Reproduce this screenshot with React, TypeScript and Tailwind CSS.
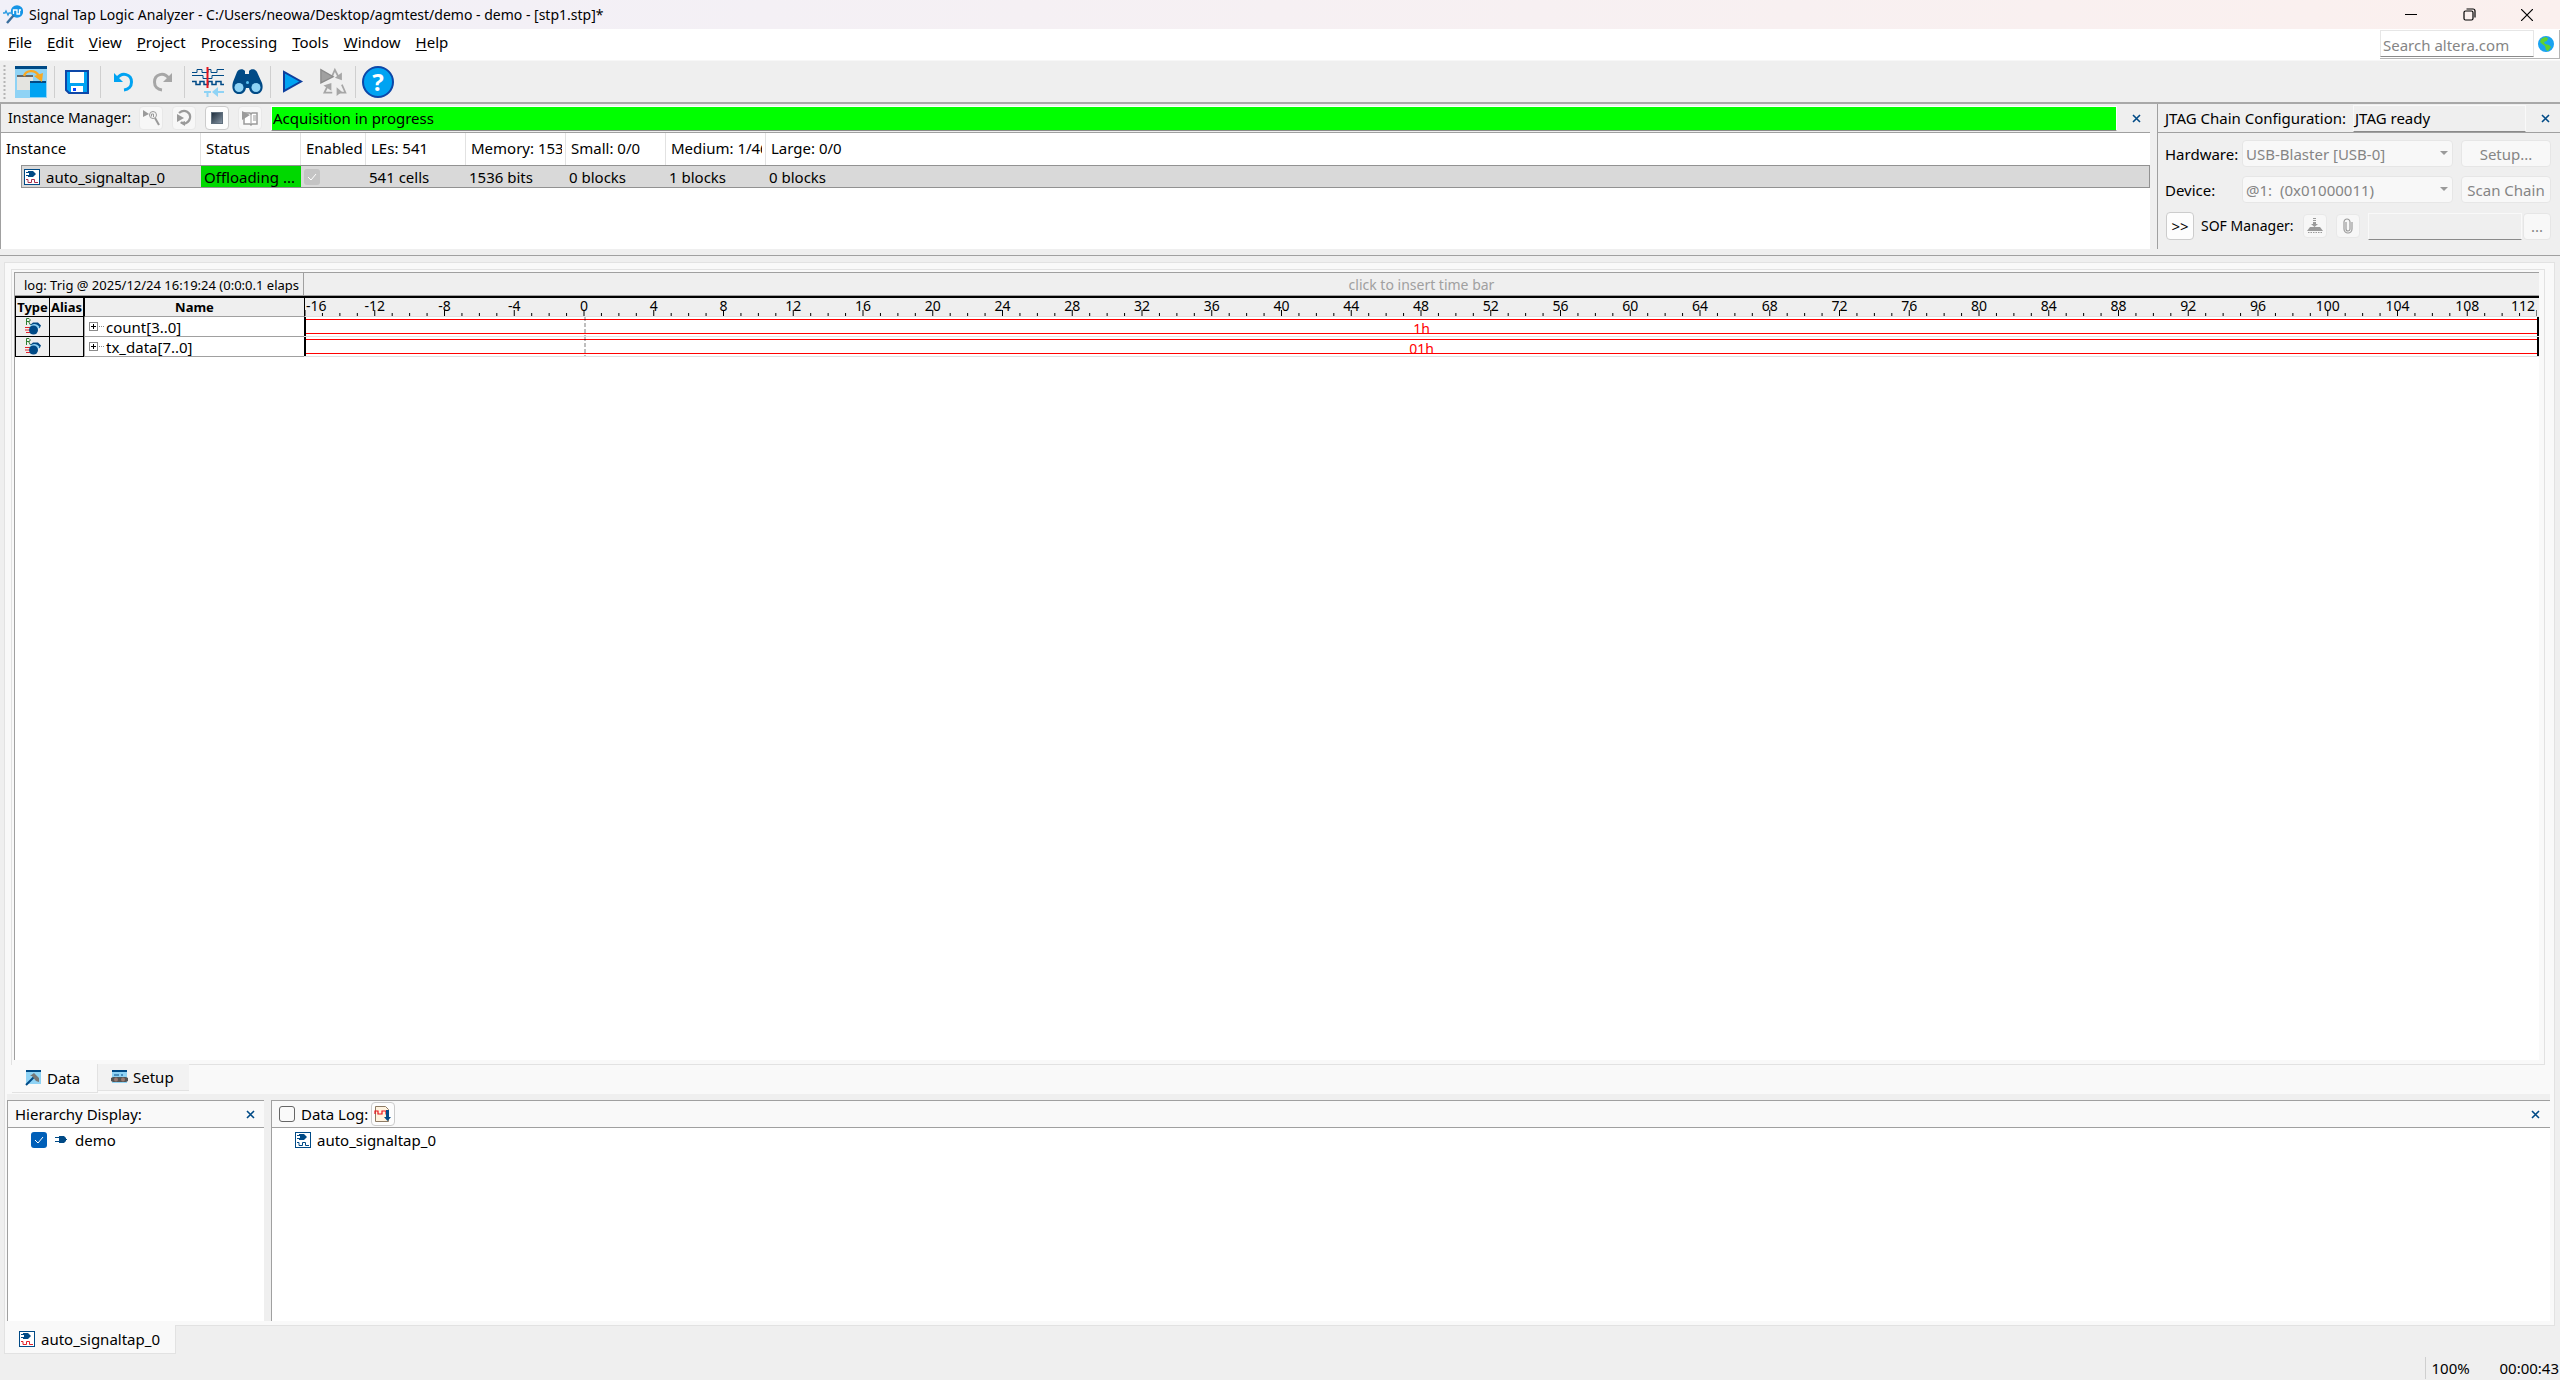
import React from "react";

const NAVY = "#004a86";
const SKY = "#00a3f2";

function SignalTapLogo() {
  return (
    <svg width="20" height="20" viewBox="0 0 20 20" aria-hidden="true">
      <circle cx="14" cy="6.5" r="5.2" fill="#1695e6" stroke="#1695e6" strokeWidth="2" />
      <path d="M10.500 9V5H14v4h2.500V5H18" fill="none" stroke="#fff" strokeWidth="1.3" />
      <path d="M10.5 10.5 4 18" stroke="#3a6f9e" strokeWidth="2.4" />
      <path d="M0 8h2l1-2 2 4 1-2h3" fill="none" stroke="#2b9ae0" strokeWidth="1.4" />
    </svg>
  );
}

function InstanceIcon({ wave = "#e3222b" }: { wave?: string }) {
  return (
    <svg width="16" height="16" viewBox="0 0 16 16" aria-hidden="true" className="shrink-0">
      <rect x="0.5" y="0.5" width="15" height="15" fill="#fff" stroke={NAVY} />
      <path d="M2 3.5h3M2 6.5h3M10 5h2" stroke={NAVY} />
      <path d="M4 2h5l2 2v2L9 8H4V7h1V3H4z" fill={NAVY} />
      <path d="M2 10.5h2v3h3.5v-3h3v3H14" fill="none" stroke={wave} />
    </svg>
  );
}

function EntityIcon() {
  return (
    <svg width="12" height="10" viewBox="0 0 12 10" aria-hidden="true">
      <path d="M0 2.500h5M0 6.500h5M9 4.500h3" stroke={NAVY} />
      <path d="M4 1h5l2 2v3L9 8H4z" fill={NAVY} />
    </svg>
  );
}

function RegIcon() {
  return (
    <svg width="18" height="17" viewBox="0 0 18 17" aria-hidden="true">
      <path d="M2.500 7V0.500H5L6 1.500V3L5 3.500H3M4.500 3.500 6.500 7" fill="none" stroke="#2e7d32" />
      <path d="M1 9.500h5M1 12h5M2 14.500h5" stroke="#e3222b" />
      <path d="M6 7 9 4.500h5l3 3-1.500 3L14 8z" fill={NAVY} />
      <path d="M5.500 8.500C8 5 13 5 15.500 9l-2 2.500z" fill="#8fd3f5" />
      <circle cx="9.500" cy="12" r="4.500" fill={NAVY} />
    </svg>
  );
}

function Close({ label }: { label: string }) {
  return (
    <button aria-label={label} className="flex h-4 w-4 shrink-0 items-center justify-center">
      <svg width="9" height="9" viewBox="0 0 9 9" aria-hidden="true">
        <path d="M1 1l7 7M8 1l-7 7" stroke={NAVY} strokeWidth="1.6" />
      </svg>
    </button>
  );
}

function ToolSep() {
  return <span className="h-8 w-px shrink-0 bg-[#cfcfcf]" />;
}

function Tool({ label, children }: { label: string; children: React.ReactNode }) {
  return (
    <button aria-label={label} className="flex h-8 w-8 shrink-0 items-center justify-center">
      {children}
    </button>
  );
}

function Toolbar() {
  return (
    <div className="flex h-[42px] items-center border-t border-[#f7f7f7] pl-[3px]">
      <svg width="3" height="34" viewBox="0 0 3 34" aria-hidden="true" className="mr-[9px]">
        <path d="M1.500 0v34" stroke="#b5b5b5" strokeWidth="2" strokeDasharray="2 2" />
      </svg>
      <Tool label="Switch window">
        <svg width="32" height="32" viewBox="0 0 32 32">
          <rect width="32" height="32" fill="#8fd3f5" />
          <rect width="32" height="3" fill={NAVY} />
          <rect x="2" y="10" width="16" height="14" fill="#e4e4e0" />
          <rect x="2" y="9" width="16" height="2" fill="#666" />
          <rect x="15" y="16" width="16" height="15" fill={SKY} />
          <rect x="15" y="15" width="16" height="2" fill={NAVY} />
          <path d="M9 10C11 4 20 3 24 10" fill="none" stroke="#f7a823" strokeWidth="2.400" />
          <path d="M19 10l9-3-1 9z" fill="#f7a823" />
        </svg>
      </Tool>
      <span className="w-[7px]" />
      <ToolSep />
      <span className="w-[6px]" />
      <Tool label="Save">
        <svg width="24" height="24" viewBox="0 0 24 24">
          <path d="M1 1h22v22H4l-3-3z" fill={SKY} stroke="#0d47a8" strokeWidth="2" />
          <rect x="5" y="2" width="14" height="11" fill="#fff" />
          <rect x="6" y="16" width="12" height="6" fill="#fff" />
          <rect x="8" y="18" width="3" height="3" fill="#0d47ff" />
        </svg>
      </Tool>
      <span className="w-[7px]" />
      <ToolSep />
      <span className="w-[7px]" />
      <Tool label="Undo">
        <svg width="20" height="20" viewBox="0 0 20 20">
          <path d="M3 6.500C8-.5 17.500 2 17.500 10c0 4.500-3 7.500-7.500 8" fill="none" stroke={SKY} strokeWidth="3" />
          <path d="M0 1v9h9z" fill={SKY} />
        </svg>
      </Tool>
      <span className="w-[6px]" />
      <Tool label="Redo">
        <svg width="20" height="20" viewBox="0 0 20 20">
          <path d="M17 6.500C12-.5 2.500 2 2.500 10c0 4.500 3 7.500 7.500 8" fill="none" stroke="#a6a6a6" strokeWidth="3" />
          <path d="M20 1v9H11z" fill="#a6a6a6" />
        </svg>
      </Tool>
      <span className="w-[6px]" />
      <ToolSep />
      <span className="w-[7px]" />
      <Tool label="Insert time bar">
        <svg width="32" height="32" viewBox="0 0 32 32" fill="none" stroke={NAVY}>
          <path d="M0 6.500h5v-3h5v3h6v-3h3v3h6v-3h7" />
          <path d="M0 9.500h11v3h9v-3h12" />
          <path d="M0 15.500h4v3h4v-3h4v3h4v-3h4v3h4v-3h5v3h3" strokeWidth="1.500" />
          <path d="M15.500 1v21" stroke="#e8141c" strokeWidth="2" />
          <path d="M12 26h7M15.500 26v5M21 26h11" stroke="#8fd3f5" strokeWidth="2" />
          <path d="M26 21v10l-6-5z" fill="#8fd3f5" stroke="none" />
        </svg>
      </Tool>
      <span className="w-[7px]" />
      <Tool label="Find">
        <svg width="32" height="32" viewBox="0 0 32 32">
          <path d="M2 16 6 6c1-3 6-4 8-1v3h4V5c2-3 7-2 8 1l5 11c2 6-1 11-6 11-4 0-6-2-7-6h-3c-1 4-3 6-7 6-5 0-8-5-6-12z" fill={NAVY} />
          <circle cx="8" cy="21.500" r="4.500" fill="#8fd3f5" />
          <circle cx="25" cy="21.500" r="4.500" fill="#8fd3f5" />
          <circle cx="16.500" cy="16.500" r="1.500" fill="#57bff0" />
        </svg>
      </Tool>
      <span className="w-[7px]" />
      <ToolSep />
      <span className="w-[6px]" />
      <Tool label="Run analysis">
        <svg width="22" height="24" viewBox="0 0 22 24">
          <path d="M2 2v19l17-9.500z" fill={SKY} stroke="#0d3f9e" strokeWidth="2" />
        </svg>
      </Tool>
      <span className="w-[7px]" />
      <Tool label="Autorun analysis">
        <svg width="32" height="32" viewBox="0 0 32 32" fill="none" className="ml-1">
          <path d="M14 9l3-7 5 10M9 20 5 28h9M20 28h9l-4-9" stroke="#a6a6a6" strokeWidth="2" />
          <path d="M17 11l8 3V5zM4 20l9-3v9zM19 22v10l6-5z" fill="#a6a6a6" />
          <path d="M1 2v15l14-7z" fill="#a0a0a0" stroke="#8a8a8a" strokeWidth="1.500" />
        </svg>
      </Tool>
      <span className="w-[7px]" />
      <ToolSep />
      <span className="w-[6px]" />
      <Tool label="Help">
        <span className="flex h-8 w-8 items-center justify-center rounded-full border-2 border-[#0d47a8] bg-[#00a3f2] text-2xl font-bold text-white">
          ?
        </span>
      </Tool>
    </div>
  );
}

const menus: [string, string, string][] = [
  ["", "F", "ile"],
  ["", "E", "dit"],
  ["", "V", "iew"],
  ["", "P", "roject"],
  ["P", "r", "ocessing"],
  ["", "T", "ools"],
  ["", "W", "indow"],
  ["", "H", "elp"],
];

function MiniButton({ label, raised, children }: { label: string; raised?: boolean; children: React.ReactNode }) {
  return (
    <button
      aria-label={label}
      className={
        raised
          ? "flex h-6 w-6 shrink-0 items-center justify-center rounded border border-[#cccccc] bg-[#fdfdfd]"
          : "flex h-6 w-6 shrink-0 items-center justify-center rounded border border-[#e8e8e8] bg-[#f7f7f7]"
      }
    >
      {children}
    </button>
  );
}

const instanceHeads = ["Instance", "Status", "Enabled", "LEs: 541", "Memory: 153", "Small: 0/0", "Medium: 1/46", "Large: 0/0"];

function InstanceManager() {
  return (
    <section className="flex min-w-0 flex-1 flex-col border-l border-[#a0a0a0] bg-white">
      <div className="flex h-[29px] items-center border-b border-[#a0a0a0] bg-[#efefef] pl-[7px]">
        <span className="w-[131px] shrink-0 text-[14px] whitespace-nowrap">Instance Manager:</span>
        <div className="flex gap-[9px]">
          <MiniButton label="Run">
            <svg width="18" height="18" viewBox="0 0 18 18" fill="none" stroke="#9a9a9a">
              <path d="M1 1v7l6-3z" fill="#9a9a9a" stroke="none" />
              <circle cx="11" cy="6" r="3.500" />
              <path d="M13 9l4 7" strokeWidth="2" />
              <path d="M9.500 7.500V5h2v3" />
            </svg>
          </MiniButton>
          <MiniButton label="Autorun">
            <svg width="18" height="18" viewBox="0 0 18 18" fill="none">
              <path d="M4 4c6-5 12 0 11 5s-6 7-9 4" stroke="#9a9a9a" strokeWidth="2.200" />
              <path d="M2 5v8l7-4zM5 14l5-2v5z" fill="#9a9a9a" />
            </svg>
          </MiniButton>
          <MiniButton label="Stop" raised>
            <span className="h-3 w-3 border border-[#5f6f7d] bg-linear-to-br from-[#22313f] to-[#8796a5]" />
          </MiniButton>
          <MiniButton label="Read data">
            <svg width="18" height="18" viewBox="0 0 18 18">
              <path d="M3 4h6l1 1 1-1h5v11h-5l-1 1-1-1H3z" fill="#fff" stroke="#9a9a9a" strokeWidth="1.500" />
              <path d="M10 5v10M12 7h3M12 9h3M12 11h3" stroke="#9a9a9a" />
              <path d="M1 2v9l8-5z" fill="#9a9a9a" />
            </svg>
          </MiniButton>
        </div>
        <div className="ml-[9px] flex h-[25px] flex-1 items-center border border-white border-b-[#8a8a8a] bg-[#00ff00] pl-px">
          Acquisition in progress
        </div>
        <div className="flex w-[33px] shrink-0 items-center justify-center pl-[5px]">
          <Close label="Close Instance Manager" />
        </div>
      </div>
      <table className="w-full table-fixed border-separate border-spacing-0 text-left">
        <colgroup>
          <col className="w-[200px]" />
          <col className="w-[100px]" />
          <col className="w-[65px]" />
          <col className="w-[100px]" />
          <col className="w-[100px]" />
          <col className="w-[100px]" />
          <col className="w-[100px]" />
          <col />
        </colgroup>
        <thead>
          <tr className="h-8">
            {instanceHeads.map((h) => (
              <th key={h} className="border-r border-[#e2e2e2] py-0 pr-[3px] pl-[5px] font-normal last:border-r-0">
                <span className="block overflow-hidden pb-[2px] whitespace-nowrap">{h}</span>
              </th>
            ))}
          </tr>
        </thead>
        <tbody>
          <tr className="h-[23px]">
            <td className="p-0 pl-5">
              <div className="flex h-[23px] items-center gap-[6px] border border-r-0 border-[#929292] bg-[#d9d9d9] pl-[2px]">
                <InstanceIcon wave="#a83250" />
                auto_signaltap_0
              </div>
            </td>
            <td className="border-y border-[#929292] bg-[#00d800] p-0 pl-[3px] whitespace-nowrap">Offloading ...</td>
            <td className="border-y border-[#929292] bg-[#d9d9d9] p-0 pl-[3px]">
              <span className="relative block h-4 w-4">
                <input
                  type="checkbox"
                  checked
                  readOnly
                  disabled
                  aria-label="Enable auto_signaltap_0"
                  className="block h-4 w-4 appearance-none rounded-[3px] bg-[#c4c4c4]"
                />
                <svg width="16" height="16" viewBox="0 0 16 16" className="pointer-events-none absolute inset-0">
                  <path d="M4 8l3 3 5-6" fill="none" stroke="#fff" />
                </svg>
              </span>
            </td>
            {["541 cells", "1536 bits", "0 blocks", "1 blocks"].map((t) => (
              <td key={t} className="border-y border-[#929292] bg-[#d9d9d9] p-0 pl-[3px]">
                {t}
              </td>
            ))}
            <td className="border border-l-0 border-[#929292] bg-[#d9d9d9] p-0 pl-[3px]">0 blocks</td>
          </tr>
        </tbody>
      </table>
    </section>
  );
}

function ChainSelect({ id, value }: { id: string; value: string }) {
  return (
    <div className="relative w-[211px]">
      <select
        id={id}
        disabled
        className="block h-[27px] w-full appearance-none rounded border border-[#e6e6e6] bg-[#f8f8f8] pl-[3px] text-[#858585] opacity-100"
      >
        <option>{value}</option>
      </select>
      <svg width="8" height="4" viewBox="0 0 8 4" className="pointer-events-none absolute top-[11px] right-[5px]">
        <path d="M0 0h8L4 4z" fill="#9a9a9a" />
      </svg>
    </div>
  );
}

function JtagChain() {
  return (
    <section className="w-[403px] shrink-0 border-l border-[#a0a0a0]">
      <div className="flex h-[29px] items-center border-b border-[#a0a0a0] pl-[7px]">
        <span className="w-[188px] shrink-0 whitespace-nowrap">JTAG Chain Configuration:</span>
        <span className="flex h-[27px] flex-1 items-center border border-[#f9f9f9] border-b-[#8a8a8a] pl-px">JTAG ready</span>
        <div className="flex w-[34px] items-center justify-center pl-[4px]">
          <Close label="Close JTAG Chain Configuration" />
        </div>
      </div>
      <div className="flex flex-col gap-[9px] pt-[7px] pr-[9px] pl-[7px]">
        <div className="flex items-center">
          <label htmlFor="hardware" className="w-[77px]">
            Hardware:
          </label>
          <ChainSelect id="hardware" value="USB-Blaster [USB-0]" />
          <button disabled className="ml-2 h-[27px] flex-1 rounded border border-[#e6e6e6] bg-[#f8f8f8] text-[#858585]">
            Setup...
          </button>
        </div>
        <div className="flex items-center">
          <label htmlFor="device" className="w-[77px]">
            Device:
          </label>
          <ChainSelect id="device" value="@1:&nbsp; (0x01000011)" />
          <button disabled className="ml-2 h-[27px] flex-1 rounded border border-[#e6e6e6] bg-[#f8f8f8] whitespace-nowrap text-[#858585]">
            Scan Chain
          </button>
        </div>
        <div className="flex items-center">
          <button className="ml-px h-[28px] w-[28px] rounded border border-[#cccccc] bg-[#fdfdfd]">&gt;&gt;</button>
          <label htmlFor="sof" className="ml-[7px] w-[102px] text-[14px] whitespace-nowrap">
            SOF Manager:
          </label>
          <MiniButton label="Program device">
            <svg width="16" height="16" viewBox="0 0 16 16" fill="#9a9a9a">
              <path d="M6 0h3v1H6zM6 2h3v1H6zM6 4h3v2h2L7.500 9 4 6h2z" />
              <path d="M3 9h10l3 4H0z" />
              <path d="M1 14.500h15" stroke="#9a9a9a" strokeDasharray="1.500 1" />
            </svg>
          </MiniButton>
          <span className="w-[9px]" />
          <MiniButton label="Attach SOF file">
            <svg width="10" height="16" viewBox="0 0 10 16" fill="none" stroke="#9a9a9a" strokeWidth="1.200">
              <path d="M3 4v7a2 2 0 0 0 4 0V4a3 3 0 0 0-6 0v7a4 4 0 0 0 8 0V4" />
            </svg>
          </MiniButton>
          <input
            id="sof"
            disabled
            className="ml-2 h-[27px] w-0 flex-1 border border-[#f9f9f9] border-b-[#8a8a8a] bg-[#efefef]"
          />
          <button disabled aria-label="Browse" className="ml-px h-[27px] w-[28px] rounded border border-[#e6e6e6] bg-[#f8f8f8] text-[#858585]">
            ...
          </button>
        </div>
      </div>
    </section>
  );
}

const samples = Array.from({ length: 129 }, (_, i) => i - 16);

function Ruler() {
  return (
    <div className="relative mr-[2px] h-[18px] text-[14px] leading-[18px]">
      <svg width="100%" height="18" className="absolute inset-0" aria-hidden="true">
        {samples.map((s) => {
          const x = `${((s + 16) / 128) * 100}%`;
          return <line key={s} x1={x} x2={x} y1={s % 4 === 0 ? 12 : 15} y2="18" stroke="#000" />;
        })}
      </svg>
      {samples
        .filter((s) => s % 4 === 0)
        .map((s) => (
          <span
            key={s}
            className={
              s === -16
                ? "absolute top-[-1px] left-[1px]"
                : s === 112
                  ? "absolute top-[-1px] right-[2px]"
                  : "absolute top-[-1px] -translate-x-1/2"
            }
            style={s === -16 || s === 112 ? undefined : { left: `${((s + 16) / 128) * 100}%` }}
          >
            {s}
          </span>
        ))}
    </div>
  );
}

function Wave({ value }: { value: string }) {
  return (
    <div className="relative h-[19px] border-x-2 border-black">
      <div className="absolute inset-x-0 top-[2px] flex h-[15px] items-center justify-center border-y border-[#ff0000] pt-1 text-[14px] leading-none text-[#ff0000]">
        {value}
      </div>
      <svg width="1" height="19" className="absolute top-0 left-[12.5%] -translate-x-1/2" aria-hidden="true">
        <path d="M0.500 0v19" stroke="#000" strokeDasharray="4 2" />
      </svg>
    </div>
  );
}

function Viewer() {
  return (
    <div className="min-h-0 flex-1 border-t border-l border-[#a0a0a0] bg-white">
      <div className="flex h-[23px] items-center border-b border-[#a0a0a0] bg-[#efefef]">
        <div className="flex h-full w-[289px] shrink-0 items-center overflow-hidden border-r border-[#a0a0a0] pt-[2px] pl-[9px] text-[13px] whitespace-nowrap">
          log: Trig @ 2025/12/24 16:19:24 (0:0:0.1 elaps
        </div>
        <div className="flex-1 text-center text-[#a0a0a0]">
          <span className="text-[14px]">click to insert time bar</span>
        </div>
      </div>
      <table className="w-full table-fixed border-separate border-spacing-0 border-t-2 border-black">
        <colgroup>
          <col className="w-[35px]" />
          <col className="w-[34px]" />
          <col className="w-[220px]" />
          <col />
        </colgroup>
        <thead>
          <tr className="h-[19px] bg-[#efefef] text-[13px] leading-[18px] font-bold">
            <th className="border-r border-b border-l border-black p-0">
              <span className="flex justify-center">Type</span>
            </th>
            <th className="border-r border-b border-black p-0">
              <span className="flex justify-center">Alias</span>
            </th>
            <th className="border-b border-l border-black border-b-[#a0a0a0] p-0">Name</th>
            <th className="border-b border-l border-black border-b-[#e0e0e0] p-0 text-left font-normal">
              <Ruler />
            </th>
          </tr>
        </thead>
        <tbody>
          {[
            ["count[3..0]", "1h"],
            ["tx_data[7..0]", "01h"],
          ].map(([name, value]) => (
            <tr key={name} className="h-5">
              <td className="border-r border-b border-l border-black bg-[#efefef] p-0">
                <div className="flex justify-center">
                  <RegIcon />
                </div>
              </td>
              <td className="border-r border-b border-black bg-[#efefef] p-0" />
              <td className="border-b border-l border-[#a0a0a0] p-0">
                <div className="flex h-[19px] items-center pl-[4px] leading-[18px]">
                  <button
                    aria-label={`Expand ${name}`}
                    className="flex h-[9px] w-[9px] items-center justify-center border border-[#8a8a8a] bg-white"
                  >
                    <svg width="5" height="5" viewBox="0 0 5 5">
                      <path d="M0 2.500h5M2.500 0v5" stroke="#000" />
                    </svg>
                  </button>
                  <span className="mr-[2px] ml-px w-[5px] border-t border-dotted border-[#8a8a8a]" />
                  <span className="pt-px">{name}</span>
                </div>
              </td>
              <td className="border-b border-[#e0e0e0] p-0">
                <Wave value={value} />
              </td>
            </tr>
          ))}
        </tbody>
      </table>
    </div>
  );
}

function BottomPanels() {
  return (
    <div className="flex h-[227px] shrink-0 gap-[7px] bg-[#efefef] pt-[6px]">
      <section className="flex w-[257px] shrink-0 flex-col border-t border-l border-[#a0a0a0] bg-white">
        <div className="flex h-[27px] items-center justify-between border-b border-[#a0a0a0] bg-[#f9f9f9] pr-[6px] pl-[7px]">
          Hierarchy Display:
          <Close label="Close Hierarchy Display" />
        </div>
        <label className="flex h-6 items-center pl-[23px]">
          <span className="relative block h-4 w-4">
            <input type="checkbox" defaultChecked className="block h-4 w-4 appearance-none rounded-[3px] bg-[#005fb8]" />
            <svg width="16" height="16" viewBox="0 0 16 16" className="pointer-events-none absolute inset-0">
              <path d="M4 8l3 3 5-6" fill="none" stroke="#fff" />
            </svg>
          </span>
          <span className="mr-2 ml-2">
            <EntityIcon />
          </span>
          demo
        </label>
      </section>
      <section className="flex min-w-0 flex-1 flex-col border-t border-l border-[#a0a0a0] bg-white">
        <div className="flex h-[27px] items-center border-b border-[#a0a0a0] bg-[#f9f9f9] pr-[7px] pl-[7px]">
          <input id="datalog" type="checkbox" className="h-4 w-4 appearance-none rounded-[3px] border border-[#666] bg-[#fafafa]" />
          <label htmlFor="datalog" className="mr-[3px] ml-[6px]">
            Data Log:
          </label>
          <MiniButton label="Save to data log" raised>
            <svg width="18" height="18" viewBox="0 0 18 18">
              <path d="M1.500 1.500h10l3 3v12h-13z" fill="#fff3df" stroke="#8d7a63" />
              <path d="M1 9V6h3v3h4V6h4v3h2" fill="none" stroke="#e8141c" strokeWidth="1.200" />
              <path d="M12 5h3v7h2l-3.500 4L10 12h2z" fill={NAVY} />
            </svg>
          </MiniButton>
          <span className="flex-1" />
          <Close label="Close Data Log" />
        </div>
        <div className="flex h-6 items-center gap-[6px] pl-[23px]">
          <InstanceIcon wave="#004a86" />
          auto_signaltap_0
        </div>
      </section>
    </div>
  );
}

export default function App() {
  return (
    <div className="flex min-h-screen flex-col bg-[#efefef] font-['Noto_Sans',sans-serif] text-[15px] leading-5 text-black">
      <header className="flex h-[29px] items-center bg-linear-to-r from-[#f1f0f8] to-[#fbf0ee] pl-[3px] text-[14px]">
        <SignalTapLogo />
        <h1 className="ml-[6px] flex-1 whitespace-nowrap">
          Signal Tap Logic Analyzer - C:/Users/neowa/Desktop/agmtest/demo - demo - [stp1.stp]*
        </h1>
        <div className="flex">
          <button aria-label="Minimize" className="flex w-[58px] items-center justify-center">
            <svg width="12" height="12" viewBox="0 0 12 12">
              <path d="M0 5.500h12" stroke="#000" />
            </svg>
          </button>
          <button aria-label="Restore" className="flex w-[58px] items-center justify-center">
            <svg width="13" height="13" viewBox="0 0 13 13" fill="none" stroke="#000" strokeWidth="1.200">
              <rect x="1" y="3" width="9" height="9" rx="1.500" />
              <path d="M3.500 1H10a2 2 0 0 1 2 2v6.500" />
            </svg>
          </button>
          <button aria-label="Close" className="mr-1 flex w-[58px] items-center justify-center">
            <svg width="12" height="12" viewBox="0 0 12 12">
              <path d="M0 0l12 12M12 0 0 12" stroke="#000" strokeWidth="1.200" />
            </svg>
          </button>
        </div>
      </header>
      <nav className="flex h-[31px] items-center justify-between bg-white pl-2">
        <div className="flex gap-[15px] pb-[5px]">
          {menus.map(([a, u, b]) => (
            <button key={u + b}>
              {a}
              <span className="underline underline-offset-2">{u}</span>
              {b}
            </button>
          ))}
        </div>
        <div className="flex items-center gap-1 border-r border-b border-[#b5b5b5] pb-px pr-[5px]">
          <input
            aria-label="Search altera.com"
            placeholder="Search altera.com"
            className="h-[27px] w-[154px] border border-[#e6e6e6] border-b-[#8a8a8a] bg-white pt-[2px] pl-[2px] placeholder:text-[#858585]"
          />
          <button aria-label="Search">
            <svg width="16" height="16" viewBox="0 0 16 16">
              <circle cx="8" cy="8" r="8" fill="#1aa3f0" />
              <path d="M3 3l4-2 3 1-1 3-3 1 1 2 4 1 2 2-3 4-2-1-1-4-3-2-2-2z" fill="#5fd12f" />
            </svg>
          </button>
        </div>
      </nav>
      <Toolbar />
      <div className="flex h-[147px] shrink-0 gap-[7px] border-t-2 border-[#a8a8a8]">
        <InstanceManager />
        <JtagChain />
      </div>
      <div className="mt-[6px] h-px bg-[#a0a0a0]" />
      <main className="mt-[6px] mr-[5px] ml-1 flex flex-1 flex-col border border-[#e2e2e2] bg-[#f9f9f9] pr-1 pb-1 pl-[2px]">
        <div className="mt-[6px] mr-[5px] ml-[4px] flex flex-1 flex-col border border-[#e2e2e2] pt-[2px] pr-[5px] pb-1 pl-[2px]">
          <Viewer />
        </div>
        <div className="-mt-px mb-px ml-[5px] flex h-[29px] items-start" role="tablist">
          <button role="tab" aria-selected="true" className="flex h-[29px] w-[86px] items-center gap-[6px] border-r border-b border-[#e2e2e2] bg-[#f9f9f9] pl-[13px]">
            <svg width="16" height="16" viewBox="0 0 16 16">
              <rect x="1" y="1" width="15" height="13" fill="#8fd3f5" />
              <rect x="1" width="15" height="2" fill={NAVY} />
              <path d="M9 7 1 15" stroke={NAVY} strokeWidth="2" />
              <path d="M5 6l4-3 5 5v4l-3-1-4-5z" fill="#777" />
            </svg>
            Data
          </button>
          <button role="tab" aria-selected="false" className="flex h-[27px] w-[91px] items-center gap-[5px] border-b border-[#e2e2e2] bg-[#f2f2f2] pl-[13px]">
            <svg width="17" height="14" viewBox="0 0 17 14">
              <rect x="1" y="1" width="15" height="12" fill="#8fd3f5" />
              <rect x="1" width="15" height="2" fill={NAVY} />
              <path d="M3 5h5M10 5h2" stroke={NAVY} />
              <path d="M0 8l2-1h13l2 1v3l-2 1H2l-2-1z" fill="#555" />
              <circle cx="5" cy="9.500" r="2" fill="#9a7a70" />
              <circle cx="12" cy="9.500" r="2" fill="#9a7a70" />
            </svg>
            Setup
          </button>
        </div>
        <BottomPanels />
      </main>
      <div className="-mt-px ml-1 flex h-[29px] w-[172px] items-center gap-[6px] border border-t-0 border-[#e2e2e2] bg-[#f9f9f9] pl-[14px]">
        <InstanceIcon />
        auto_signaltap_0
      </div>
      <footer className="mt-[2px] flex h-6 items-center justify-end pr-px">
        <span className="flex h-[22px] w-[74px] items-center border-l border-[#cfcfcf] pl-[5px]">100%</span>
        <span>00:00:43</span>
      </footer>
    </div>
  );
}
